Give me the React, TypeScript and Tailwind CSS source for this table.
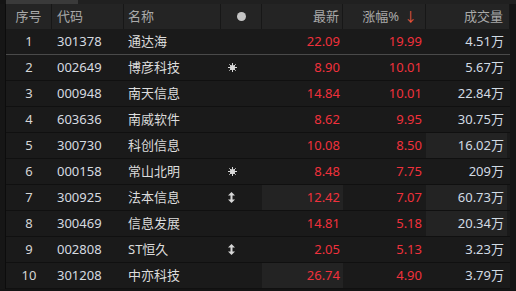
import React from "react";

type Row = {
  n: number;
  code: string;
  name: string;
  icon?: "star" | "arrow";
  last: string;
  pct: string;
  vol: string;
  hiLast?: boolean;
  hiVol?: boolean;
};

const rows: Row[] = [
  { n: 1, code: "301378", name: "通达海", last: "22.09", pct: "19.99", vol: "4.51万" },
  { n: 2, code: "002649", name: "博彦科技", icon: "star", last: "8.90", pct: "10.01", vol: "5.67万" },
  { n: 3, code: "000948", name: "南天信息", last: "14.84", pct: "10.01", vol: "22.84万" },
  { n: 4, code: "603636", name: "南威软件", last: "8.62", pct: "9.95", vol: "30.75万" },
  { n: 5, code: "300730", name: "科创信息", last: "10.08", pct: "8.50", vol: "16.02万", hiVol: true },
  { n: 6, code: "000158", name: "常山北明", icon: "star", last: "8.48", pct: "7.75", vol: "209万" },
  { n: 7, code: "300925", name: "法本信息", icon: "arrow", last: "12.42", pct: "7.07", vol: "60.73万", hiLast: true, hiVol: true },
  { n: 8, code: "300469", name: "信息发展", last: "14.81", pct: "5.18", vol: "20.34万", hiVol: true },
  { n: 9, code: "002808", name: "ST恒久", icon: "arrow", last: "2.05", pct: "5.13", vol: "3.23万" },
  { n: 10, code: "301208", name: "中亦科技", last: "26.74", pct: "4.90", vol: "3.79万", hiLast: true },
];

function StarIcon() {
  return (
    <svg width="9" height="9" viewBox="0 0 9 9">
      <circle cx="4.5" cy="4.5" r="2.6" fill="#d8d8d8" />
      <g stroke="#d8d8d8" strokeWidth="1">
        <line x1="4.5" y1="0" x2="4.5" y2="9" />
        <line x1="0" y1="4.5" x2="9" y2="4.5" />
        <line x1="1.3" y1="1.3" x2="7.7" y2="7.7" />
        <line x1="7.7" y1="1.3" x2="1.3" y2="7.7" />
      </g>
    </svg>
  );
}

function ArrowIcon() {
  return (
    <svg width="7" height="11" viewBox="0 0 7 11">
      <polygon points="3.5,0 7,3.5 0,3.5" fill="#d8d8d8" />
      <polygon points="3.5,11 7,7.5 0,7.5" fill="#d8d8d8" />
      <rect x="2.5" y="3" width="2" height="5" fill="#d8d8d8" />
    </svg>
  );
}

const cols = "grid grid-cols-[46px_72px_97px_41px_81px_83px_84px]";

export default function App() {
  return (
    <div
      className="w-[516px] h-[291px] bg-[#141414] overflow-hidden text-[13px] leading-none"
      style={{ fontFamily: '"Noto Sans", "Noto Sans CJK SC", sans-serif' }}
    >
      <div className="flex h-[4px]">
        <div className="w-[6px] bg-[#141414]" />
        <div className="w-[72px] bg-[#3a3a3a]" />
        <div className="flex-1 bg-[#202020]" />
      </div>
      <div className="flex">
        <div className="w-[6px] border-r border-[#0c0c0c] bg-[#161616]" />
        <div className="w-[504px]">
          <div className={`${cols} h-[25px] bg-[#242424] text-[#a9a9a9]`}>
            <div className="flex items-center justify-center border-r border-[#171717]">序号</div>
            <div className="flex items-center pl-[5px] border-r border-[#171717]">代码</div>
            <div className="flex items-center pl-[4px] border-r border-[#171717]">名称</div>
            <div className="flex items-center justify-center border-r border-[#171717]">
              <div className="w-[9px] h-[9px] rounded-full bg-[#c4c4c4]" />
            </div>
            <div className="flex items-center justify-end pr-[3px] border-r border-[#171717]">最新</div>
            <div className="flex items-center justify-end pr-[8px] border-r border-[#171717]">
              涨幅%<span className="ml-[5px] text-[#e8553c]">↓</span>
            </div>
            <div className="flex items-center justify-end pr-[6px] border-r border-[#171717]">成交量</div>
          </div>
          {rows.map((r) => (
            <div
              key={r.n}
              className={`${cols} h-[26px] bg-[#1a1a1a] border-b ${r.n === 1 ? "border-[#4a4a4a]" : "border-[#101010]"}`}
            >
              <div className="flex items-center justify-center text-[#d6d6d6]">{r.n}</div>
              <div className="flex items-center pl-[5px] text-[#d6dbe0]">{r.code}</div>
              <div className="flex items-center pl-[4px] text-[#dcdcdc]">{r.name}</div>
              <div className="flex items-center pl-[7px]">
                {r.icon === "star" && <StarIcon />}
                {r.icon === "arrow" && <ArrowIcon />}
              </div>
              <div
                className={`flex items-center justify-end pr-[3px] text-[#f0313c] ${r.hiLast ? "bg-[#232323]" : ""}`}
              >
                {r.last}
              </div>
              <div className="flex items-center justify-end pr-[4px] text-[#f0313c]">{r.pct}</div>
              <div
                className={`flex items-center justify-end pr-[6px] mr-[3px] text-[#d2dbe4] ${r.hiVol ? "bg-[#232323]" : ""}`}
              >
                <span className="mr-[-3px]">{r.vol}</span>
              </div>
            </div>
          ))}
        </div>
      </div>
    </div>
  );
}
